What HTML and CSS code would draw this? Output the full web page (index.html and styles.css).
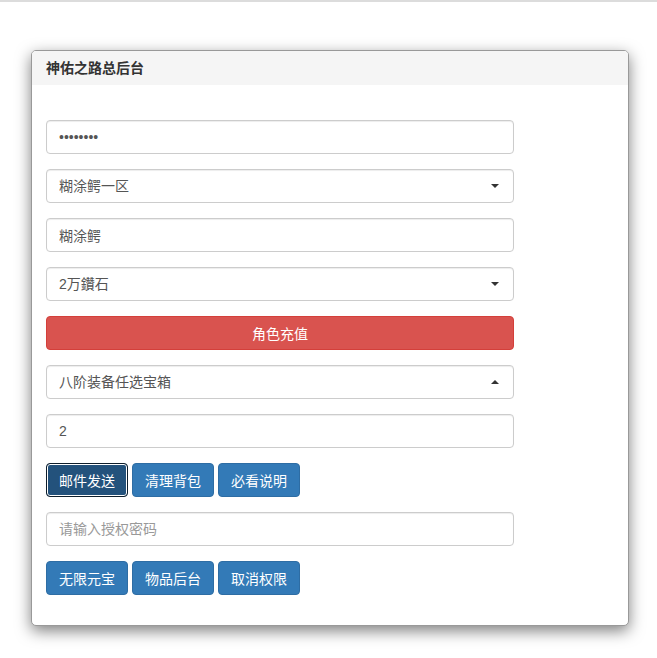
FILE: index.html
```html
<!DOCTYPE html>
<html lang="zh-CN">
<head>
    <meta charset="UTF-8">
    <meta name="viewport" content="width=device-width, initial-scale=1.0">
    <title>神佑之路总后台</title>
    <link rel="stylesheet" href="styles.css">
</head>
<body>
    <div class="topline"></div>
    <div class="panel">
        <div class="panel-heading">神佑之路总后台</div>
        <div class="panel-body">
            <input type="password" class="form-control" value="12345678">
            <div class="select-wrap">
                <select class="form-control">
                    <option>糊涂鳄一区</option>
                </select>
                <span class="caret"></span>
            </div>
            <input type="text" class="form-control" value="糊涂鳄">
            <div class="select-wrap">
                <select class="form-control">
                    <option>2万鑽石</option>
                </select>
                <span class="caret"></span>
            </div>
            <button class="btn btn-danger btn-block">角色充值</button>
            <div class="select-wrap">
                <select class="form-control">
                    <option>八阶装备任选宝箱</option>
                </select>
                <span class="caret up"></span>
            </div>
            <input type="text" class="form-control" value="2">
            <div class="btn-row">
                <button class="btn btn-primary active">邮件发送</button>
                <button class="btn btn-primary">清理背包</button>
                <button class="btn btn-primary">必看说明</button>
            </div>
            <input type="text" class="form-control" placeholder="请输入授权密码">
            <div class="btn-row">
                <button class="btn btn-primary">无限元宝</button>
                <button class="btn btn-primary">物品后台</button>
                <button class="btn btn-primary">取消权限</button>
            </div>
        </div>
    </div>
</body>
</html>
```

FILE: styles.css
```css
* { box-sizing: border-box; }
body { margin: 0; font-family: "Liberation Sans", "Noto Sans CJK SC", sans-serif; font-size: 14px; color: #333; background: #fff; }
.topline { height: 2px; background: #dcdcdc; }
.panel { width: 598px; margin: 48px 0 32px 31px; border: 1px solid #999; border-radius: 5px; background: #fff; box-shadow: 0 5px 15px rgba(0, 0, 0, .5); }
.panel-heading { height: 34px; padding: 0 14px; line-height: 34px; font-size: 14px; font-weight: bold; background: #f5f5f5; border-radius: 4px 4px 0 0; }
.panel-body { display: flex; flex-direction: column; gap: 15px; padding: 35px 14px 30px; }
.form-control { display: block; width: 468px; height: 34px; padding: 6px 12px; font: inherit; font-size: 14px; color: #555; background: #fff; border: 1px solid #ccc; border-radius: 4px; box-shadow: inset 0 1px 1px rgba(0, 0, 0, .075); outline: none; }
.form-control::placeholder { color: #999; }
select.form-control { appearance: none; -webkit-appearance: none; }
.select-wrap { position: relative; width: 468px; }
.caret { position: absolute; right: 15px; top: 15px; width: 0; height: 0; border-left: 4px solid transparent; border-right: 4px solid transparent; border-top: 4px solid #333; }
.caret.up { border-top: 0; border-bottom: 4px solid #333; }
.btn { height: 34px; padding: 6px 12px; font: inherit; font-size: 14px; color: #fff; border: 1px solid transparent; border-radius: 4px; cursor: pointer; }
.btn-block { width: 468px; }
.btn-danger { background: #d9534f; border-color: #d43f3a; }
.btn-primary { background: #337ab7; border-color: #2e6da4; }
.btn-primary.active { background: #23527c; border-color: #0e1e2c; box-shadow: inset 0 0 0 1px #fff; }
.btn-row { display: flex; gap: 4px; }
```
